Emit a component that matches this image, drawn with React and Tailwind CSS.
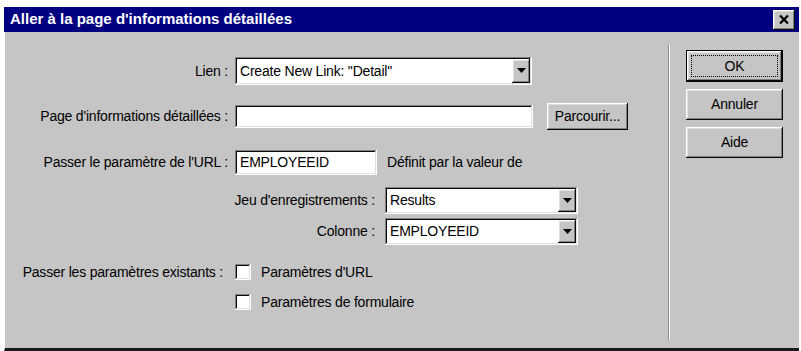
import React from 'react';

const raised =
  'shadow-[inset_-1px_-1px_#0a0a0a,inset_1px_1px_#ffffff,inset_-2px_-2px_#808080,inset_2px_2px_#dfdfdf]';
const sunken =
  'shadow-[inset_-1px_-1px_#ffffff,inset_1px_1px_#808080,inset_-2px_-2px_#dfdfdf,inset_2px_2px_#0a0a0a]';

function Arrow() {
  return (
    <svg width="9" height="6" viewBox="0 0 9 6">
      <path d="M0 0h9L4.5 5z" fill="#000" />
    </svg>
  );
}

function Select({ value, className }) {
  return (
    <div className={`flex items-center bg-white pl-[5px] pr-[2px] ${sunken} ${className}`}>
      <span className="flex-1 truncate text-black">{value}</span>
      <div className={`flex h-[calc(100%-4px)] w-[18px] items-center justify-center bg-[#c5c5c5] ${raised}`}>
        <Arrow />
      </div>
    </div>
  );
}

function Button({ children, primary }) {
  if (primary) {
    return (
      <div className="h-[32px] w-[97px] border border-black">
        <div className={`flex h-full w-full items-center justify-center bg-[#c5c5c5] p-[4px] ${raised}`}>
          <div className="flex h-full w-full items-center justify-center border border-dotted border-black">
            {children}
          </div>
        </div>
      </div>
    );
  }
  return (
    <div className={`flex h-[31px] w-[97px] items-center justify-center bg-[#c5c5c5] ${raised}`}>
      {children}
    </div>
  );
}

function Check({ label }) {
  return (
    <div className="flex items-center">
      <div className={`h-[16px] w-[16px] bg-white ${sunken}`} />
      <span className="ml-[10px]">{label}</span>
    </div>
  );
}

export default function App() {
  return (
    <div className="h-[351px] w-[801px] overflow-hidden bg-white pl-[4px] pt-[7px] font-['Liberation_Sans',Arial,sans-serif] text-[14px] tracking-[-0.2px] text-black">
      <div className="flex h-[344px] w-[795px] flex-col">
        <div className="flex h-[25px] items-center justify-between bg-[#000080] pl-[6px] pr-[4px]">
          <span className="text-[15px] font-bold tracking-normal text-white">Aller à la page d'informations détaillées</span>
          <div className={`flex h-[20px] w-[22px] items-center justify-center bg-[#c5c5c5] ${raised}`}>
            <svg width="10" height="9" viewBox="0 0 10 9">
              <path d="M1 0.5l8 8M9 0.5l-8 8" stroke="#000" strokeWidth="2.2" />
            </svg>
          </div>
        </div>
        <div className="flex flex-1 border-b-[3px] border-l border-b-[#1a1a1a] border-l-white bg-[#c5c5c5]">
          <div className="flex w-[663px] flex-col whitespace-nowrap">
            <div className="mt-[25px] flex h-[28px] items-center">
              <span className="w-[223px] text-right">Lien :</span>
              <Select value='Create New Link: "Detail"' className="ml-[7px] h-[28px] w-[297px]" />
            </div>
            <div className="mt-[18px] flex h-[27px] items-center">
              <span className="w-[223px] text-right">Page d'informations détaillées :</span>
              <div className={`ml-[7px] h-[23px] w-[298px] bg-white ${sunken}`} />
              <div className={`ml-[14px] flex h-[27px] w-[81px] items-center justify-center bg-[#c5c5c5] ${raised}`}>
                Parcourir...
              </div>
            </div>
            <div className="mt-[20px] flex h-[25px] items-center">
              <span className="w-[223px] text-right">Passer le paramètre de l'URL :</span>
              <div className={`ml-[7px] flex h-[25px] w-[142px] items-center bg-white pl-[5px] ${sunken}`}>
                EMPLOYEEID
              </div>
              <span className="ml-[10px]">Définit par la valeur de</span>
            </div>
            <div className="mt-[12px] flex h-[27px] items-center">
              <span className="ml-[225px] w-[145px] text-right">Jeu d'enregistrements :</span>
              <Select value="Results" className="ml-[10px] h-[27px] w-[193px]" />
            </div>
            <div className="mt-[4px] flex h-[27px] items-center">
              <span className="ml-[225px] w-[145px] text-right">Colonne :</span>
              <Select value="EMPLOYEEID" className="ml-[10px] h-[27px] w-[193px]" />
            </div>
            <div className="mt-[19px] flex h-[16px] items-center">
              <span className="w-[223px] pr-[5px] text-right">Passer les paramètres existants :</span>
              <div className="ml-[7px]">
                <Check label="Paramètres d'URL" />
              </div>
            </div>
            <div className="mt-[14px] flex h-[16px] items-center">
              <div className="ml-[230px]">
                <Check label="Paramètres de formulaire" />
              </div>
            </div>
          </div>
          <div className="mb-[8px] mt-[13px] w-[2px] border-l border-r border-l-[#8a8a8a] border-r-white" />
          <div className="flex flex-col gap-[7px] pl-[16px] pt-[18px]">
            <Button primary>OK</Button>
            <Button>Annuler</Button>
            <Button>Aide</Button>
          </div>
        </div>
      </div>
    </div>
  );
}
